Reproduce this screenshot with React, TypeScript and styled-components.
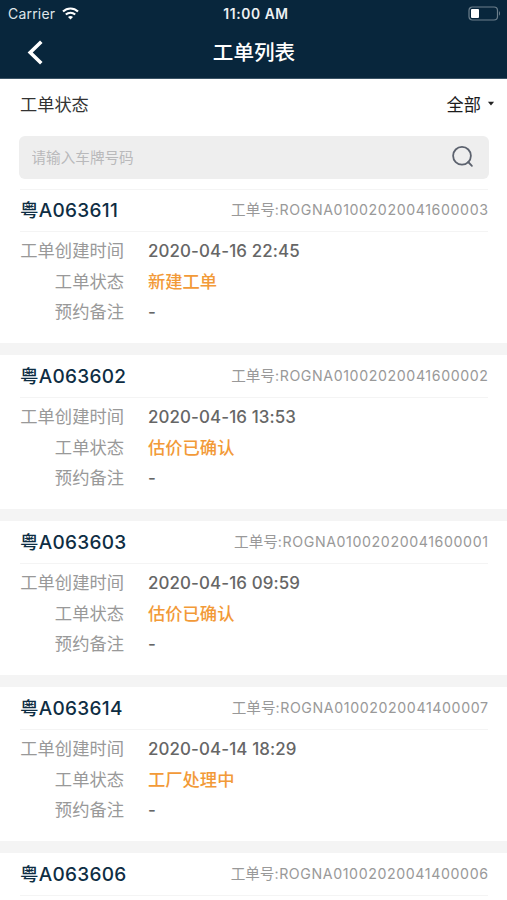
import React from 'react';
import styled, { createGlobalStyle } from 'styled-components';

const GlobalStyle = createGlobalStyle`
  * { box-sizing: border-box; }
  body {
    margin: 0;
    background: #fff;
    font-family: Inter, "Noto Sans CJK SC", sans-serif;
    overflow: hidden;
  }
`;

const Screen = styled.div`
  width: 507px;
  height: 900px;
  overflow: hidden;
  background: #fff;
`;

const Header = styled.header`
  height: 79px;
  background: #08263c;
  color: #fff;
  border-bottom: 1px solid #3b5365;
`;

const StatusBar = styled.div`
  display: grid;
  grid-template-columns: 1fr auto 1fr;
  align-items: center;
  height: 27px;
  padding: 0 6px 0 8px;
`;

const Carrier = styled.div`
  display: flex;
  align-items: center;
  gap: 7px;
  font-size: 14px;
  line-height: 20px;
  letter-spacing: 0.2px;
  color: #dfe5e9;
`;

const Clock = styled.div`
  padding-left: 3px;
  font-size: 13.8px;
  line-height: 20px;
  font-weight: 600;
  letter-spacing: 0.6px;
  color: #edf1f3;
`;

const BatterySlot = styled.div`
  display: flex;
  justify-content: flex-end;
`;

const NavBar = styled.div`
  display: grid;
  grid-template-columns: 60px 1fr 60px;
  align-items: center;
  height: 51px;
`;

const BackButton = styled.button`
  display: flex;
  padding: 0 0 0 27px;
  border: 0;
  background: none;
  color: #fff;
`;

const Title = styled.h1`
  margin: 0;
  padding-left: 1px;
  font-size: 20.6px;
  line-height: 30px;
  font-weight: 500;
  text-align: center;
`;

const FilterRow = styled.div`
  display: flex;
  justify-content: space-between;
  align-items: center;
  height: 48px;
  padding: 0 12px 0 20px;
  font-size: 17.2px;
  color: #333;
`;

const FilterValue = styled.div`
  display: flex;
  align-items: center;
  gap: 6px;
  color: #1c1c1c;
`;

const SearchBox = styled.div`
  display: flex;
  align-items: center;
  justify-content: space-between;
  height: 43px;
  margin: 9px 18.5px 10px 19px;
  padding: 0 15px 0 12.5px;
  border-radius: 6px;
  background: #eeeeee;
`;

const SearchInput = styled.input`
  flex: 1;
  padding: 0;
  border: 0;
  outline: 0;
  background: transparent;
  font: 14.6px/24px Inter, "Noto Sans CJK SC", sans-serif;
  &::placeholder { color: #b9b9bb; }
`;

const Order = styled.section`
  height: 166px;
  padding: 0 19px 0 20px;
  border-bottom: 12px solid #f4f4f4;
`;

const OrderHead = styled.div<{ $first: boolean }>`
  display: flex;
  justify-content: space-between;
  align-items: center;
  height: 43px;
  border-top: 1px solid ${(p) => (p.$first ? '#f4f4f4' : 'transparent')};
  border-bottom: 1px solid #f4f4f4;
`;

const Plate = styled.h2`
  margin: 0;
  font-size: 19px;
  line-height: 28px;
  font-weight: 500;
  letter-spacing: 0.28px;
  color: #0e2d43;
`;

const Province = styled.span`
  font-size: 18.5px;
`;

const OrderNumber = styled.div`
  flex: none;
  font-size: 14.6px;
  line-height: 22px;
  padding-bottom: 1px;
  white-space: nowrap;
  color: #999;
`;

const Code = styled.span`
  font-size: 14.2px;
  letter-spacing: 0.6px;
  margin-right: -0.6px;
`;

const Details = styled.dl`
  display: grid;
  grid-template-columns: 104px 1fr;
  grid-auto-rows: 30.6px;
  column-gap: 24px;
  align-items: center;
  margin: 0;
  padding-top: 4px;
`;

const Label = styled.dt`
  font-size: 17.3px;
  line-height: 26px;
  text-align: right;
  white-space: nowrap;
  color: #999;
`;

const Value = styled.dd<{ $accent?: boolean }>`
  margin: 0;
  font-size: ${(p) => (p.$accent ? '17.3px' : '16.9px')};
  line-height: 26px;
  font-weight: ${(p) => (p.$accent ? 500 : 450)};
  letter-spacing: ${(p) => (p.$accent ? '0' : '0.12px')};
  color: ${(p) => (p.$accent ? '#f29a38' : '#666')};
`;

const WifiIcon = () => (
  <svg width="17" height="13" viewBox="0 0 17 13" fill="none" stroke="#fff" strokeWidth="2.1">
    <path d="M1 4.6C5.2.4 11.8.4 16 4.6" />
    <path d="M3.8 7.6c2.7-2.5 6.7-2.5 9.4 0" />
    <path d="M8.5 12.4 6 9.9c1.4-1.2 3.6-1.2 5 0z" fill="#fff" stroke="none" />
  </svg>
);

const BatteryIcon = () => (
  <svg width="33" height="15" viewBox="0 0 33 15">
    <rect x="1" y="1" width="28.5" height="13" rx="3.5" fill="none" stroke="#6c7f8c" strokeWidth="1.2" />
    <rect x="3" y="3" width="8" height="9" rx="1" fill="#fff" />
    <path d="M31 5.3c1.3.5 1.3 3.9 0 4.4z" fill="#6c7f8c" />
  </svg>
);

const BackIcon = () => (
  <svg width="17" height="25" viewBox="0 0 17 25" fill="none" stroke="currentColor" strokeWidth="3.6">
    <path d="M14.3 1.7 3.2 12.5l11.1 10.8" />
  </svg>
);

const CaretIcon = () => (
  <svg width="8" height="5" viewBox="0 0 8 5">
    <path d="M.9.8h6.2L4 4.5z" fill="#222" />
  </svg>
);

const SearchIcon = () => (
  <svg width="23" height="23" viewBox="0 0 23 23" fill="none" stroke="#5c626e" strokeWidth="1.8" strokeLinecap="round">
    <circle cx="11" cy="9.8" r="8.9" />
    <path d="m17.2 16 3.7 3.8" />
  </svg>
);

const orders = [
  { plate: 'A063611', code: 'ROGNA01002020041600003', time: '2020-04-16 22:45', status: '新建工单' },
  { plate: 'A063602', code: 'ROGNA01002020041600002', time: '2020-04-16 13:53', status: '估价已确认' },
  { plate: 'A063603', code: 'ROGNA01002020041600001', time: '2020-04-16 09:59', status: '估价已确认' },
  { plate: 'A063614', code: 'ROGNA01002020041400007', time: '2020-04-14 18:29', status: '工厂处理中' },
  { plate: 'A063606', code: 'ROGNA01002020041400006' },
];

export default function App() {
  return (
    <Screen>
      <GlobalStyle />
      <Header>
        <StatusBar>
          <Carrier>Carrier <WifiIcon /></Carrier>
          <Clock>11:00 AM</Clock>
          <BatterySlot><BatteryIcon /></BatterySlot>
        </StatusBar>
        <NavBar>
          <BackButton aria-label="返回"><BackIcon /></BackButton>
          <Title>工单列表</Title>
        </NavBar>
      </Header>
      <FilterRow>
        <span>工单状态</span>
        <FilterValue>全部 <CaretIcon /></FilterValue>
      </FilterRow>
      <SearchBox>
        <SearchInput placeholder="请输入车牌号码" />
        <SearchIcon />
      </SearchBox>
      {orders.map((order, index) => (
        <Order key={order.code}>
          <OrderHead $first={index === 0}>
            <Plate><Province>粤</Province>{order.plate}</Plate>
            <OrderNumber>工单号<Code>:{order.code}</Code></OrderNumber>
          </OrderHead>
          {order.time && (
            <Details>
              <Label>工单创建时间</Label>
              <Value>{order.time}</Value>
              <Label>工单状态</Label>
              <Value $accent>{order.status}</Value>
              <Label>预约备注</Label>
              <Value>-</Value>
            </Details>
          )}
        </Order>
      ))}
    </Screen>
  );
}
